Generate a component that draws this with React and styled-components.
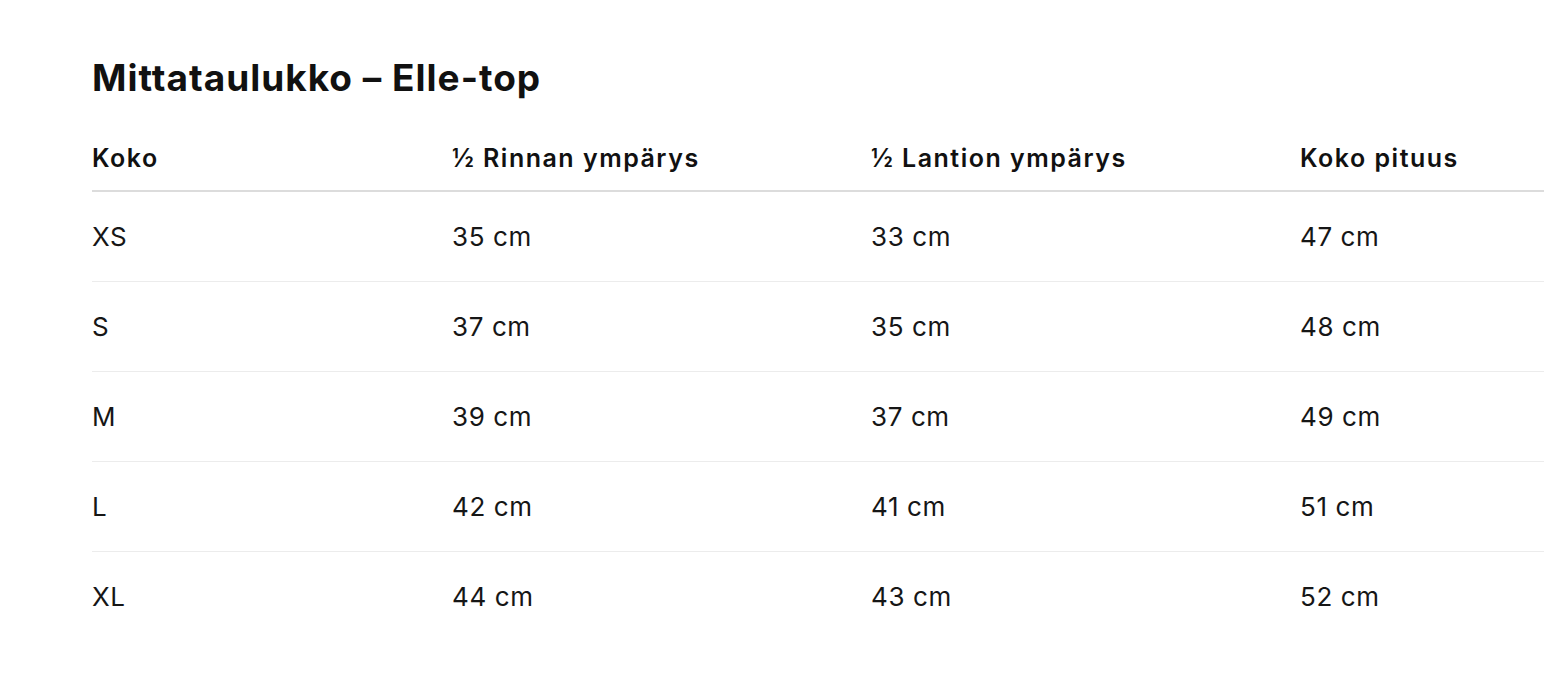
import styled, { createGlobalStyle } from 'styled-components'

const GlobalStyle = createGlobalStyle`
  html, body {
    margin: 0;
    padding: 0;
    background: #fff;
    overflow: hidden;
  }
  body {
    font-family: Inter, "Noto Sans", sans-serif;
    color: #121212;
  }
`

const Page = styled.div`
  width: 1544px;
  height: 682px;
  overflow: hidden;
  padding: 56px 0 0 92px;
  box-sizing: border-box;
`

const Title = styled.h2`
  margin: 0 0 24px;
  font-size: 37px;
  line-height: 44px;
  font-weight: 700;
  letter-spacing: 1px;
  color: #111;
`

const Table = styled.table`
  width: 1700px;
  border-collapse: collapse;
  table-layout: fixed;
`

const Head = styled.th`
  text-align: left;
  font-size: 25px;
  line-height: 30px;
  font-weight: 600;
  letter-spacing: 1.5px;
  height: 64px;
  padding: 2px 0 0;
  vertical-align: middle;
  border-bottom: 2px solid #dcdcdc;
  width: ${p => p.$w}px;
  color: #111;
`

const Row = styled.tr`
  border-bottom: 1px solid #ececec;
  &:last-child {
    border-bottom: none;
  }
`

const Cell = styled.td`
  font-size: 26px;
  line-height: 30px;
  font-weight: 400;
  letter-spacing: 0.6px;
  height: 89px;
  padding: 0;
  vertical-align: middle;
  color: #161616;
`

const columns = [
  { label: 'Koko', w: 360 },
  { label: '½ Rinnan ympärys', w: 419 },
  { label: '½ Lantion ympärys', w: 429 },
  { label: 'Koko pituus', w: 492 },
]

const rows = [
  ['XS', '35 cm', '33 cm', '47 cm'],
  ['S', '37 cm', '35 cm', '48 cm'],
  ['M', '39 cm', '37 cm', '49 cm'],
  ['L', '42 cm', '41 cm', '51 cm'],
  ['XL', '44 cm', '43 cm', '52 cm'],
]

export default function App() {
  return (
    <>
      <GlobalStyle />
      <Page>
        <Title>Mittataulukko – Elle-top</Title>
        <Table>
          <thead>
            <tr>
              {columns.map(c => (
                <Head key={c.label} $w={c.w}>{c.label}</Head>
              ))}
            </tr>
          </thead>
          <tbody>
            {rows.map(r => (
              <Row key={r[0]}>
                {r.map((v, i) => (
                  <Cell key={i}>{v}</Cell>
                ))}
              </Row>
            ))}
          </tbody>
        </Table>
      </Page>
    </>
  )
}
